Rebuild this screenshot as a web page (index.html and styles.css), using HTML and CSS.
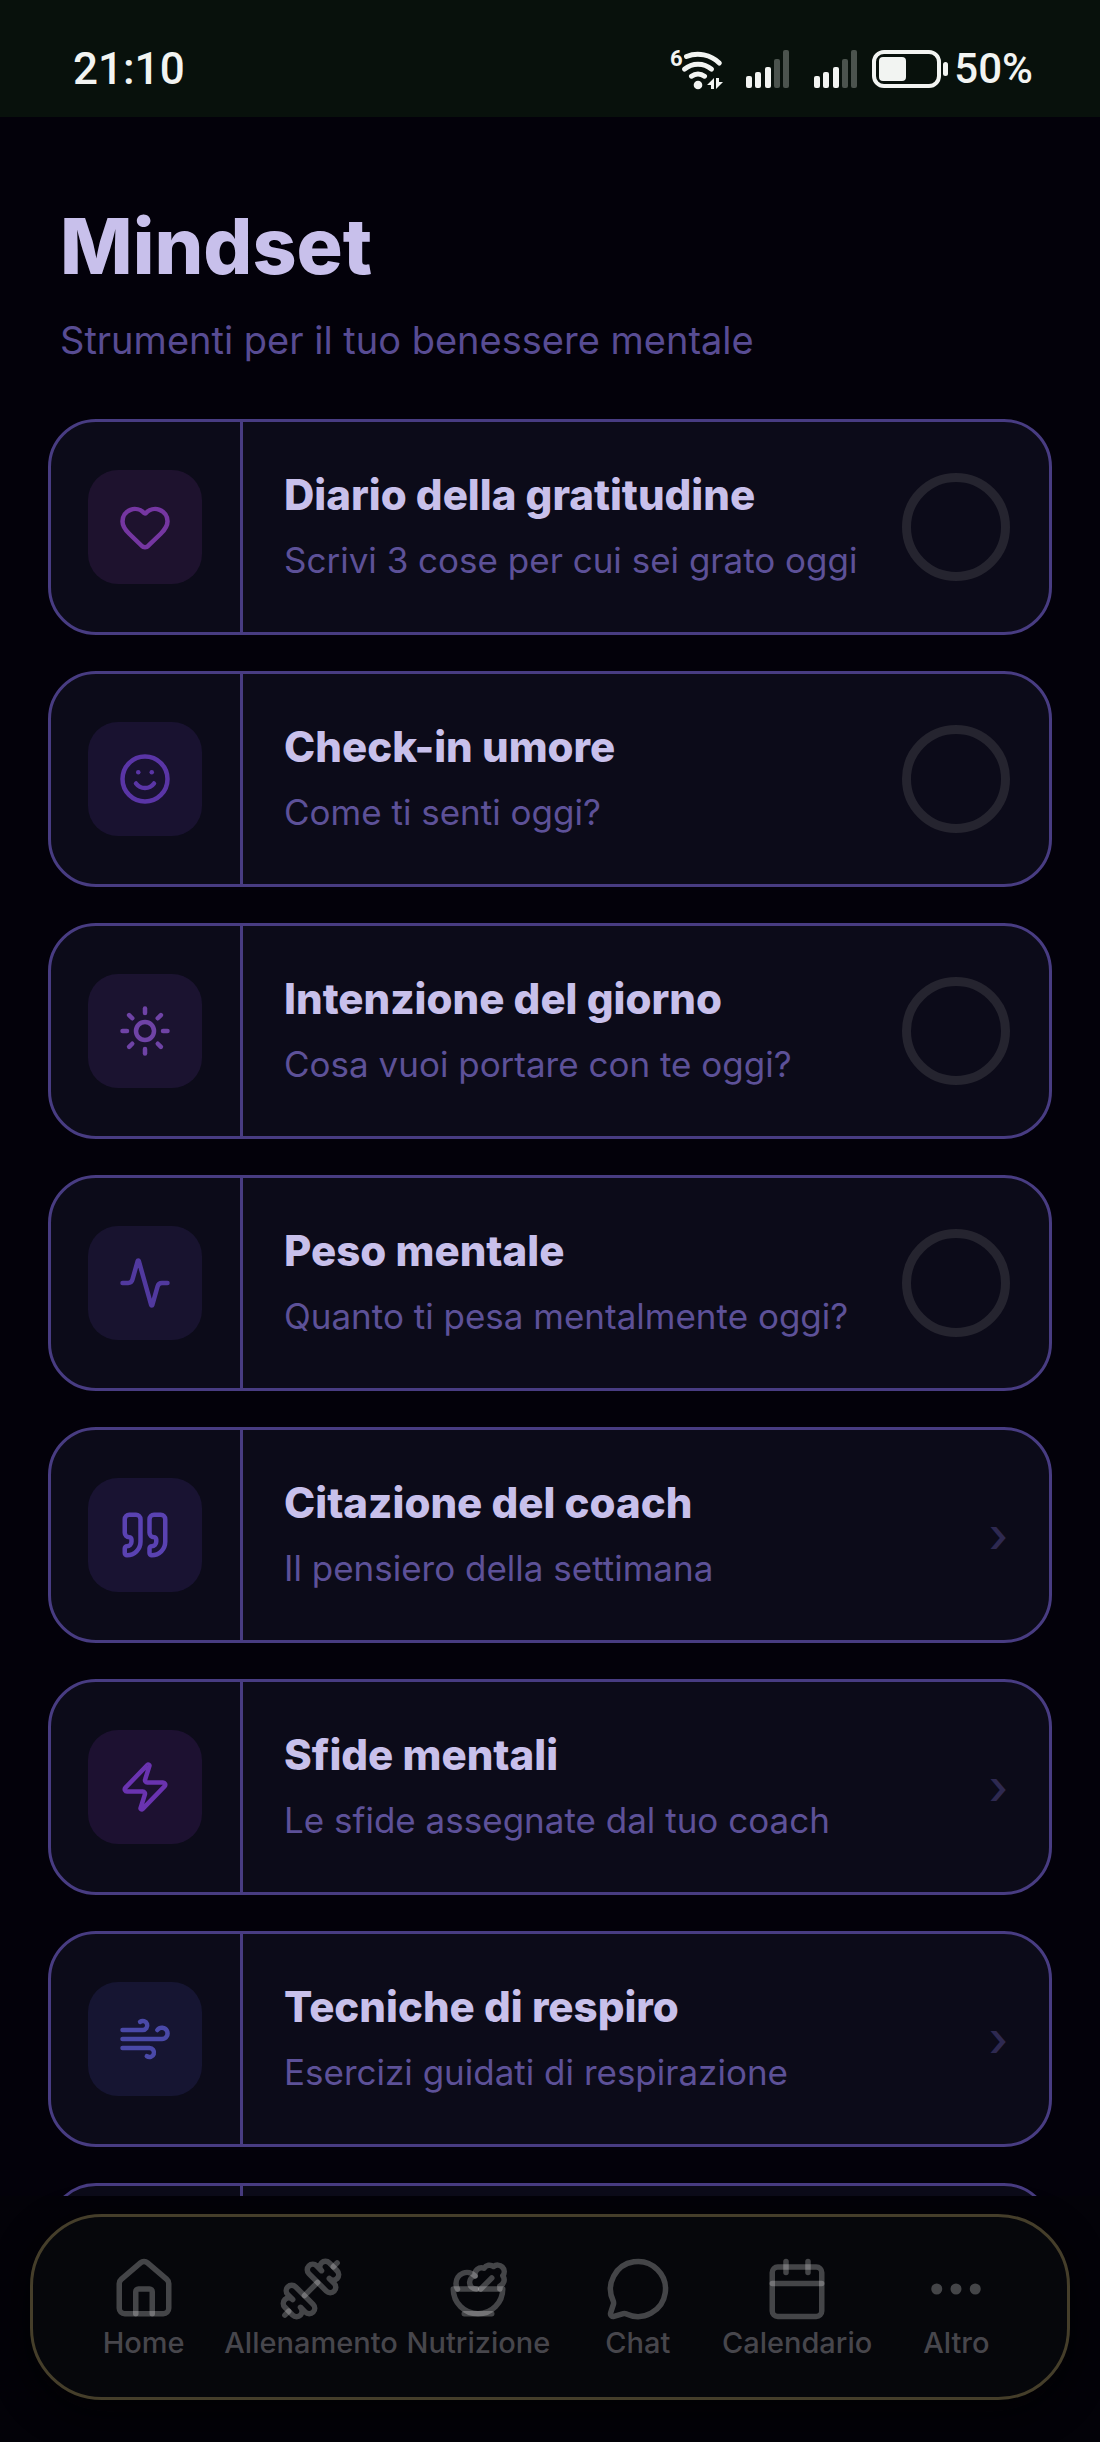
FILE: index.html
```html
<!DOCTYPE html>
<html lang="it">
<head>
    <meta charset="UTF-8">
    <meta name="viewport" content="width=device-width, initial-scale=1.0">
    <title>Mindset</title>
    <link rel="stylesheet" href="styles.css">
</head>
<body>

<div class="app">
    <div class="status-bar">
        <span class="time">21:10</span>
        <div class="status-icons">
            <svg class="wifi" viewBox="0 0 58 42">
                <text x="2" y="18">6</text>
                <path d="M18.5 8.5A30.7 30.7 0 0 1 51.3 15"/>
                <path d="M16.5 21.2A20.5 20.5 0 0 1 43.5 21.2"/>
                <path d="M23.5 28.2A11 11 0 0 1 36.5 28.2"/>
                <circle cx="30" cy="37" r="4.3"/>
                <polygon points="46,30 46,41 43,41 43,37 39,37"/>
                <polygon points="48,30 51,30 51,34 55,34 48,41"/>
            </svg>
            <svg class="signal" viewBox="0 0 44 38">
                <rect x="0" y="26" width="6" height="12" rx="2"/>
                <rect x="9" y="22" width="6" height="16" rx="2"/>
                <rect x="19" y="17" width="6" height="21" rx="2"/>
                <rect class="off" x="28" y="9" width="6" height="29" rx="2"/>
                <rect class="off" x="37" y="0" width="6" height="38" rx="2"/>
            </svg>
            <svg class="signal" viewBox="0 0 44 38">
                <rect x="0" y="26" width="6" height="12" rx="2"/>
                <rect x="9" y="22" width="6" height="16" rx="2"/>
                <rect x="19" y="17" width="6" height="21" rx="2"/>
                <rect class="off" x="28" y="9" width="6" height="29" rx="2"/>
                <rect class="off" x="37" y="0" width="6" height="38" rx="2"/>
            </svg>
            <svg class="battery" viewBox="0 0 76 38">
                <rect class="shell" x="2" y="2" width="65" height="34" rx="10"/>
                <rect x="7" y="7" width="27" height="24" rx="4"/>
                <rect x="71" y="12" width="5" height="14" rx="2.5"/>
            </svg>
            <span class="level">50%</span>
        </div>
    </div>

    <main>
        <header>
            <h1>Mindset</h1>
            <p>Strumenti per il tuo benessere mentale</p>
        </header>

        <div class="cards">
            <a href="#" class="card heart">
                <div class="card-icon">
                    <div class="tile">
                        <svg viewBox="0 0 24 24"><path d="M2 9.5a5.5 5.5 0 0 1 9.591-3.676.56.56 0 0 0 .818 0A5.49 5.49 0 0 1 22 9.5c0 2.29-1.5 4-3 5.5l-5.492 5.313a2 2 0 0 1-3 .019L5 15c-1.5-1.5-3-3.2-3-5.5"/></svg>
                    </div>
                </div>
                <div class="card-text">
                    <h2>Diario della gratitudine</h2>
                    <p>Scrivi 3 cose per cui sei grato oggi</p>
                </div>
                <div class="ring"></div>
            </a>

            <a href="#" class="card smile">
                <div class="card-icon">
                    <div class="tile">
                        <svg viewBox="0 0 24 24"><circle cx="12" cy="12" r="10"/><path d="M8 14s1.5 2 4 2 4-2 4-2"/><path d="M9 9h.01"/><path d="M15 9h.01"/></svg>
                    </div>
                </div>
                <div class="card-text">
                    <h2>Check-in umore</h2>
                    <p>Come ti senti oggi?</p>
                </div>
                <div class="ring"></div>
            </a>

            <a href="#" class="card sun">
                <div class="card-icon">
                    <div class="tile">
                        <svg viewBox="0 0 24 24"><circle cx="12" cy="12" r="4"/><path d="M12 2v2"/><path d="M12 20v2"/><path d="m4.93 4.93 1.41 1.41"/><path d="m17.66 17.66 1.41 1.41"/><path d="M2 12h2"/><path d="M20 12h2"/><path d="m6.34 17.66-1.41 1.41"/><path d="m19.07 4.93-1.41 1.41"/></svg>
                    </div>
                </div>
                <div class="card-text">
                    <h2>Intenzione del giorno</h2>
                    <p>Cosa vuoi portare con te oggi?</p>
                </div>
                <div class="ring"></div>
            </a>

            <a href="#" class="card activity">
                <div class="card-icon">
                    <div class="tile">
                        <svg viewBox="0 0 24 24"><path d="M22 12h-2.48a2 2 0 0 0-1.93 1.46l-2.35 8.36a.25.25 0 0 1-.48 0L9.24 2.18a.25.25 0 0 0-.48 0l-2.35 8.36A2 2 0 0 1 4.49 12H2"/></svg>
                    </div>
                </div>
                <div class="card-text">
                    <h2>Peso mentale</h2>
                    <p>Quanto ti pesa mentalmente oggi?</p>
                </div>
                <div class="ring"></div>
            </a>

            <a href="#" class="card quote">
                <div class="card-icon">
                    <div class="tile">
                        <svg viewBox="0 0 24 24"><path d="M16 3a2 2 0 0 0-2 2v6a2 2 0 0 0 2 2 1 1 0 0 1 1 1v1a2 2 0 0 1-2 2 1 1 0 0 0-1 1v2a1 1 0 0 0 1 1 6 6 0 0 0 6-6V5a2 2 0 0 0-2-2z"/><path d="M5 3a2 2 0 0 0-2 2v6a2 2 0 0 0 2 2 1 1 0 0 1 1 1v1a2 2 0 0 1-2 2 1 1 0 0 0-1 1v2a1 1 0 0 0 1 1 6 6 0 0 0 6-6V5a2 2 0 0 0-2-2z"/></svg>
                    </div>
                </div>
                <div class="card-text">
                    <h2>Citazione del coach</h2>
                    <p>Il pensiero della settimana</p>
                </div>
                <span class="chevron">›</span>
            </a>

            <a href="#" class="card zap">
                <div class="card-icon">
                    <div class="tile">
                        <svg viewBox="0 0 24 24"><path d="M4 14a1 1 0 0 1-.78-1.63l9.9-10.2a.5.5 0 0 1 .86.46l-1.92 6.02A1 1 0 0 0 13 10h7a1 1 0 0 1 .78 1.63l-9.9 10.2a.5.5 0 0 1-.86-.46l1.92-6.02A1 1 0 0 0 11 14z"/></svg>
                    </div>
                </div>
                <div class="card-text">
                    <h2>Sfide mentali</h2>
                    <p>Le sfide assegnate dal tuo coach</p>
                </div>
                <span class="chevron">›</span>
            </a>

            <a href="#" class="card wind">
                <div class="card-icon">
                    <div class="tile">
                        <svg viewBox="0 0 24 24"><path d="M12.8 19.6A2 2 0 1 0 14 16H2"/><path d="M17.5 8a2.5 2.5 0 1 1 2 4H2"/><path d="M9.8 4.4A2 2 0 1 1 11 8H2"/></svg>
                    </div>
                </div>
                <div class="card-text">
                    <h2>Tecniche di respiro</h2>
                    <p>Esercizi guidati di respirazione</p>
                </div>
                <span class="chevron">›</span>
            </a>

            <div class="card">
                <div class="card-icon"></div>
            </div>
        </div>
    </main>

    <footer>
        <nav>
            <a href="#">
                <svg viewBox="0 0 24 24"><path d="M15 21v-8a1 1 0 0 0-1-1h-4a1 1 0 0 0-1 1v8"/><path d="M3 10a2 2 0 0 1 .709-1.528l7-6a2 2 0 0 1 2.582 0l7 6A2 2 0 0 1 21 10v9a2 2 0 0 1-2 2H5a2 2 0 0 1-2-2z"/></svg>
                <span>Home</span>
            </a>
            <a href="#">
                <svg viewBox="0 0 24 24"><path d="M17.596 12.768a2 2 0 1 0 2.829-2.829l-1.768-1.767a2 2 0 0 0 2.828-2.829l-2.828-2.828a2 2 0 0 0-2.829 2.828l-1.767-1.768a2 2 0 1 0-2.829 2.829z"/><path d="m2.5 21.5 1.4-1.4"/><path d="m20.1 3.9 1.4-1.4"/><path d="M5.343 21.485a2 2 0 1 0 2.829-2.828l1.767 1.768a2 2 0 1 0 2.829-2.829l-6.364-6.364a2 2 0 1 0-2.829 2.829l1.768 1.767a2 2 0 0 0-2.828 2.829z"/><path d="m9.6 14.4 4.8-4.8"/></svg>
                <span>Allenamento</span>
            </a>
            <a href="#">
                <svg viewBox="0 0 24 24"><path d="M7 21h10"/><path d="M12 21a9 9 0 0 0 9-9H3a9 9 0 0 0 9 9Z"/><path d="M11.38 12a2.4 2.4 0 0 1-.4-4.77 2.4 2.4 0 0 1 3.2-2.77 2.4 2.4 0 0 1 3.47-.63 2.4 2.4 0 0 1 3.37 3.37 2.4 2.4 0 0 1-1.1 3.7 2.51 2.51 0 0 1 .03 1.1"/><path d="m13 12 4-4"/><path d="M10.9 7.25A3.99 3.99 0 0 0 4 10c0 .73.2 1.41.54 2"/></svg>
                <span>Nutrizione</span>
            </a>
            <a href="#">
                <svg viewBox="0 0 24 24"><path d="M2.992 16.342a2 2 0 0 1 .094 1.167l-1.065 3.29a1 1 0 0 0 1.236 1.168l3.413-.998a2 2 0 0 1 1.099.092 10 10 0 1 0-4.777-4.719"/></svg>
                <span>Chat</span>
            </a>
            <a href="#">
                <svg viewBox="0 0 24 24"><path d="M8 2v4"/><path d="M16 2v4"/><rect x="3" y="4" width="18" height="18" rx="2"/><path d="M3 10h18"/></svg>
                <span>Calendario</span>
            </a>
            <a href="#">
                <svg viewBox="0 0 24 24"><circle cx="12" cy="12" r="1"/><circle cx="19" cy="12" r="1"/><circle cx="5" cy="12" r="1"/></svg>
                <span>Altro</span>
            </a>
        </nav>
    </footer>
</div>

</body>
</html>
```
FILE: styles.css
```css
* {
    box-sizing: border-box;
}

body {
    margin: 0;
    background: #03010a;
    font-family: Inter, "Liberation Sans", sans-serif;
}

h1, h2, p {
    margin: 0;
}

a {
    color: inherit;
    text-decoration: none;
}

svg {
    display: block;
    flex: none;
    overflow: visible;
}

.app {
    display: flex;
    flex-direction: column;
    height: 100vh;
}

/* status bar */
.status-bar {
    display: flex;
    justify-content: space-between;
    align-items: center;
    padding: 43px 67px 22px 73px;
    background: #08110c;
    color: #f2f4f2;
    font-family: Roboto, sans-serif;
    font-size: 44px;
    font-weight: 500;
    line-height: 52px;
}

.status-icons {
    display: flex;
    align-items: center;
}

.status-icons svg {
    fill: #f2f4f2;
}

.wifi {
    width: 58px;
    height: 42px;
    margin-right: 20px;
}

.wifi text {
    font-size: 22px;
    font-weight: 700;
    line-height: 22px;
}

.wifi path {
    fill: none;
    stroke: #f2f4f2;
    stroke-width: 5;
    stroke-linecap: round;
}

.signal {
    width: 44px;
    height: 38px;
    margin-right: 24px;
}

.signal + .signal {
    margin-right: 14px;
}

.signal .off {
    fill: #4b534e;
}

.battery {
    width: 76px;
    height: 38px;
    margin-right: 6px;
}

.battery .shell {
    fill: none;
    stroke: #f2f4f2;
    stroke-width: 4;
}

.level {
    font-size: 42px;
}

/* content */
main {
    flex: 1;
    min-height: 0;
    overflow: hidden;
    padding: 83px 48px 0;
}

header {
    padding: 0 12px;
    margin-bottom: 56px;
}

h1 {
    color: #c8c0eb;
    font-size: 77px;
    font-weight: 800;
    line-height: 92px;
}

header p {
    margin-top: 25px;
    color: #584c93;
    font-size: 38px;
    line-height: 46px;
}

.cards {
    display: flex;
    flex-direction: column;
    gap: 36px;
}

.card {
    display: flex;
    align-items: center;
    min-height: 216px;
    padding-right: 39px;
    border: 3px solid #483c82;
    border-radius: 48px;
    background: #0c0b19;
}

.card-icon {
    display: flex;
    align-items: center;
    align-self: stretch;
    min-width: 192px;
    padding: 0 37px;
    border-right: 3px solid #483c82;
}

.tile {
    display: flex;
    align-items: center;
    justify-content: center;
    width: 114px;
    height: 114px;
    border-radius: 30px;
}

.tile svg {
    width: 54px;
    height: 54px;
    fill: none;
    stroke: currentColor;
    stroke-width: 2;
    stroke-linecap: round;
    stroke-linejoin: round;
}

.heart .tile { background: #1e122e; color: #7536a1; }
.smile .tile { background: #191230; color: #5a35a6; }
.sun .tile { background: #1b1330; color: #6f43a6; }
.activity .tile { background: #18132f; color: #51399f; }
.quote .tile { background: #191332; color: #5a42b2; }
.zap .tile { background: #1d1131; color: #6a33b0; }
.wind .tile { background: #161532; color: #4a49a8; }

.card-text {
    flex: 1;
    padding: 0 0 4px 41px;
}

h2 {
    color: #c8c0eb;
    font-size: 42px;
    font-weight: 800;
    line-height: 52px;
}

.card-text p {
    margin-top: 18px;
    color: #5d5198;
    font-size: 35px;
    line-height: 42px;
}

.ring {
    width: 108px;
    height: 108px;
    border: 9px solid #25242f;
    border-radius: 50%;
}

.chevron {
    padding-right: 2px;
    color: #2e2950;
    font-size: 48px;
    font-weight: 500;
    line-height: 58px;
}

/* bottom navigation */
footer {
    padding: 18px 30px 42px;
    background: #030208;
}

nav {
    display: flex;
    padding: 39px 31px 36px;
    border: 3px solid #453e2a;
    border-radius: 72px;
    background: #06070b;
    box-shadow: 0 12px 36px #020204;
}

nav a {
    display: flex;
    flex: 1;
    flex-direction: column;
    align-items: center;
    gap: 3px;
    padding: 0 1px;
    color: #47464c;
    font-size: 29px;
    font-weight: 500;
    line-height: 36px;
}

/* translucent strokes, crossings come out lighter */
nav svg {
    width: 66px;
    height: 66px;
    fill: none;
    stroke: rgba(255, 255, 255, 0.25);
    stroke-width: 2;
    stroke-linecap: round;
    stroke-linejoin: round;
}
```
